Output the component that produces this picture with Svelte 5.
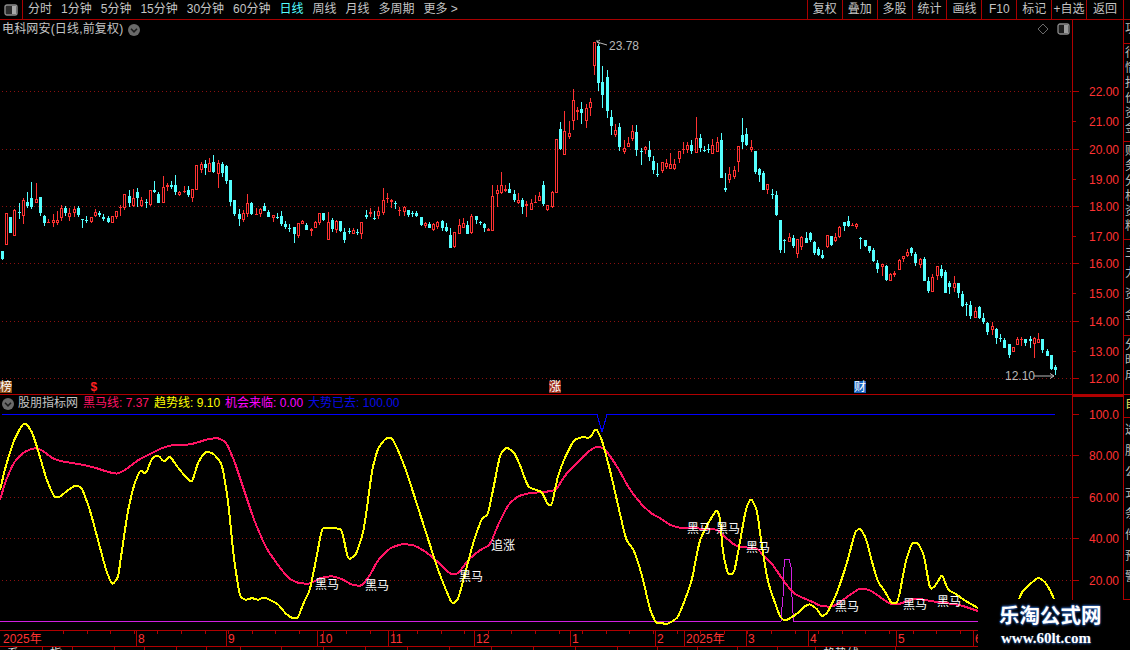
<script>
  // [high, bodyTop, bodyBottom, low, isRed] in chart pixels, one row per trading day
  const candles = [
    [251,251,259,260,0],[213,213,245,245,1],[217,217,233,233,0],[209,210,236,236,1],[203,212,213,219,0],
    [198,200,216,224,1],[192,202,206,208,0],[182,198,207,209,0],[183,199,203,203,1],[197,197,213,216,0],
    [215,216,223,226,0],[219,222,223,223,1],[214,220,223,227,1],[211,220,223,225,1],[205,208,218,221,1],
    [206,208,213,216,0],[208,213,217,221,1],[206,209,213,217,1],[206,208,215,217,0],[219,219,220,228,0],
    [216,220,221,223,0],[217,217,222,223,1],[209,212,216,217,1],[211,213,215,217,0],[214,217,219,221,0],
    [216,218,222,223,0],[216,216,223,223,1],[211,211,217,219,1],[205,207,207,216,1],[194,194,208,210,1],
    [190,196,203,207,0],[189,198,206,207,1],[188,192,198,207,0],[197,200,206,207,1],[199,202,203,208,0],
    [190,190,205,206,1],[181,190,192,193,0],[192,194,203,203,0],[176,187,203,203,1],[183,185,187,191,1],
    [181,185,187,189,0],[175,185,192,195,0],[191,192,195,196,1],[186,191,192,193,1],[186,190,195,197,0],
    [189,189,198,202,1],[165,165,190,190,1],[162,164,170,173,1],[160,164,168,175,0],[158,163,172,172,1],
    [155,162,172,173,0],[160,163,174,188,1],[162,164,173,177,0],[165,166,181,184,0],[180,180,202,206,0],
    [200,200,214,216,0],[209,214,219,226,0],[210,213,220,222,1],[194,203,214,217,1],[202,203,214,215,0],
    [208,214,214,215,1],[208,209,214,217,1],[203,206,211,211,0],[210,212,217,217,0],[215,215,218,222,1],
    [213,217,217,219,0],[211,216,224,226,0],[221,224,227,229,0],[224,228,229,232,0],[227,227,234,243,0],
    [223,223,236,238,1],[220,221,224,224,1],[223,225,230,230,0],[228,229,231,236,1],[221,222,228,228,1],
    [213,213,223,225,1],[213,213,220,221,0],[212,222,240,240,1],[218,220,229,232,0],[220,221,230,233,1],
    [221,221,231,232,0],[228,232,240,243,0],[228,231,232,234,0],[228,230,234,234,1],[229,232,233,235,0],
    [222,222,234,239,1],[210,215,217,219,0],[208,212,214,217,1],[211,218,219,220,0],[207,211,216,219,1],
    [188,200,213,215,1],[193,198,199,203,1],[199,200,202,208,1],[201,203,204,209,0],[207,210,211,216,1],
    [206,207,212,216,1],[210,210,215,217,0],[211,213,214,217,0],[211,213,216,217,0],[217,217,225,226,0],
    [222,223,226,228,1],[222,224,228,228,0],[223,224,230,231,1],[221,222,227,229,1],[220,221,228,231,0],
    [223,227,231,232,0],[228,235,248,248,0],[232,232,247,248,1],[219,225,234,234,1],[218,223,228,228,1],
    [221,225,234,234,0],[214,216,233,234,1],[216,216,220,224,0],[221,222,223,225,0],[223,224,228,232,0],
    [228,229,231,231,1],[185,196,231,231,1],[185,190,194,207,1],[172,185,193,194,1],[185,189,191,192,1],
    [183,189,193,193,0],[190,194,200,202,0],[193,200,203,204,1],[198,200,207,214,0],[201,204,206,217,1],
    [199,203,210,210,1],[195,202,203,203,1],[192,196,201,201,1],[181,185,204,206,0],[205,205,210,211,1],
    [191,192,207,208,1],[139,139,193,193,1],[122,129,149,150,0],[111,131,155,155,1],[121,133,137,139,1],
    [89,100,121,130,1],[107,110,112,120,1],[102,109,113,124,0],[104,108,121,128,1],[98,102,108,116,1],
    [42,42,66,75,1],[44,46,83,91,0],[66,82,95,108,0],[70,77,111,118,0],[110,117,126,135,0],
    [124,130,135,137,1],[123,127,147,151,0],[140,148,152,154,1],[137,143,147,147,1],[125,131,139,141,1],
    [125,132,150,156,0],[148,151,152,165,0],[146,147,150,154,1],[141,150,157,161,0],[156,161,170,174,0],
    [163,174,175,177,0],[162,162,171,173,1],[159,163,167,169,1],[153,164,169,169,1],[159,164,169,170,1],
    [151,151,159,163,1],[142,149,150,154,1],[142,145,150,153,1],[140,145,151,154,0],[117,138,153,153,1],
    [134,138,148,152,0],[146,150,151,152,0],[144,149,150,153,0],[139,145,154,154,1],[137,142,152,152,1],
    [133,140,178,178,0],[173,188,190,192,0],[167,174,180,183,1],[166,170,177,179,1],[146,146,162,172,1],
    [118,135,142,149,0],[128,134,145,146,0],[140,147,150,152,1],[151,151,172,174,0],[168,169,175,182,0],
    [171,173,190,190,0],[184,184,190,194,1],[189,194,195,199,0],[191,195,215,216,0],[220,220,250,253,0],
    [239,240,241,253,0],[233,237,242,242,1],[235,238,246,248,0],[239,239,254,258,1],[236,237,247,250,1],
    [232,238,243,243,0],[232,233,240,242,0],[241,242,253,255,0],[247,249,255,256,0],[250,255,258,259,0],
    [235,235,247,248,1],[236,236,245,246,0],[233,237,241,242,1],[226,227,237,238,1],[222,222,226,231,0],
    [216,221,226,227,0],[223,225,226,226,1],[223,224,227,229,1],[237,238,239,249,0],[240,240,246,247,0],
    [246,246,251,253,0],[248,250,261,262,0],[260,263,269,273,0],[264,264,267,276,1],[265,266,280,281,0],
    [273,274,281,281,1],[271,273,275,277,1],[259,260,270,270,1],[256,256,259,262,1],[249,252,256,257,1],
    [247,248,253,256,0],[252,254,263,266,0],[258,259,265,268,1],[257,259,281,281,0],[277,281,291,293,0],
    [274,277,292,292,1],[266,266,276,280,1],[265,269,276,278,0],[270,272,293,293,0],[281,283,287,294,0],
    [276,283,288,292,1],[283,283,293,298,0],[291,294,306,307,0],[302,304,305,316,0],[301,305,316,319,0],
    [307,311,318,318,1],[306,307,318,319,0],[313,318,322,324,0],[322,323,332,335,0],[322,326,330,335,1],
    [328,329,338,344,0],[334,338,339,342,0],[338,340,348,348,0],[344,344,355,358,0],[347,347,352,352,1],
    [337,339,345,345,1],[337,339,340,346,1],[339,339,343,346,0],[336,339,341,348,0],[337,338,344,358,1],
    [333,339,343,343,1],[339,339,350,353,0],[349,351,356,356,0],[355,355,369,370,0],[365,367,370,375,0],
  ];
  const candleX = (i) => Math.floor(2.3 + 4.23 * i);

  const periods = ["分时", "1分钟", "5分钟", "15分钟", "30分钟", "60分钟", "日线", "周线", "月线", "多周期", "更多 >"];
  const actions = ["复权", "叠加", "多股", "统计", "画线", "F10", "标记", "+自选", "返回"];

  const prices = [22, 21, 20, 19, 18, 17, 16, 15, 14, 13, 12];
  const priceY = [91, 121, 149, 179, 206, 236, 263, 293, 321, 351, 378];
  const kGrid = [91, 149, 206, 263, 321, 378];
  const subGrid = [455, 497, 538, 580];
  const subScale = [[414, "100.0"], [455, "80.00"], [497, "60.00"], [538, "40.00"], [580, "20.00"]];

  const yellow = "0,490 6,465 14,440 22,425 26,423 32,432 38,450 46,478 54,497 60,497 68,490 76,485 82,488 90,510 98,540 106,570 112,585 118,578 122,550 128,510 134,485 140,470 146,474 152,458 158,455 164,462 170,456 176,465 184,475 192,483 198,462 206,451 214,454 222,464 228,500 234,560 240,597 246,600 252,598 258,600 264,597 270,600 278,604 286,614 292,618 298,618 304,602 310,590 316,560 322,528 328,528 336,528 342,530 348,560 356,555 364,530 372,470 378,448 386,438 392,438 398,450 406,470 414,495 422,520 430,545 438,570 446,590 452,604 458,600 466,570 474,540 482,518 488,515 494,485 500,455 506,447 514,452 520,465 528,487 536,490 542,492 548,505 552,505 558,475 566,455 574,440 582,437 590,438 596,428 602,440 610,470 618,505 626,540 634,550 642,575 650,610 656,623 660,623 667,624 673,621 678,617 685,600 692,580 697,553 700,540 707,525 717,509 720,518 723,553 728,575 734,573 738,553 746,508 751,498 757,510 762,547 768,583 780,617 785,621 792,617 798,613 805,606 810,604 817,609 822,617 828,612 837,593 847,563 855,532 860,528 866,538 872,562 878,582 884,590 892,604 898,602 906,560 912,543 918,543 924,555 930,590 936,585 942,574 948,590 956,594 964,600 978,608";
  const yellowTail = "1019,599 1022,592 1027,587 1038,577 1045,582 1050,590 1054,599";
  const pink = "0,500 6,480 14,462 24,452 34,448 42,450 52,458 60,461 72,463 84,465 96,468 108,472 118,474 128,468 138,460 150,454 162,448 172,445 186,445 196,443 208,439 218,438 226,442 234,460 244,490 254,520 266,548 278,565 288,578 298,583 310,584 320,578 332,576 342,579 352,585 362,586 370,575 378,560 390,548 402,544 414,545 426,552 438,562 450,574 458,574 468,560 480,550 490,545 498,525 508,505 518,496 530,493 545,492 556,490 566,474 578,462 590,450 598,446 606,450 618,468 630,490 642,505 652,514 660,518 670,525 680,528 717,529 725,537 737,547 757,548 763,555 773,565 783,580 793,593 803,598 813,602 820,606 833,607 847,597 860,588 870,590 880,597 890,604 900,604 915,598 930,601 945,603 960,605 978,611";
  const pulse = "0,621.5 781,621.5 782,607 783,597 784,567 785,559 789,559 791,567 792,597 793,613 793.5,621.5 978,621.5";
  const blue = "2,414.5 597,414.5 602,432 607,414.5 1055,414.5";

  // takes the sharpest edge off the hand-read curve, corners stay close to the reading
  function soften(points) {
    const p = points.split(" ").map((s) => s.split(",").map(Number));
    const near = (a, b) => `${a[0] + (b[0] - a[0]) * 0.3} ${a[1] + (b[1] - a[1]) * 0.3}`;
    let d = `M${p[0][0]} ${p[0][1]}`;
    for (let i = 1; i < p.length - 1; i++) {
      d += `L${near(p[i], p[i - 1])}Q${p[i][0]} ${p[i][1]} ${near(p[i], p[i + 1])}`;
    }
    const last = p[p.length - 1];
    return d + `L${last[0]} ${last[1]}`;
  }

  const signals = [
    [315, 584, "黑马"], [365, 585, "黑马"], [459, 576, "黑马"], [491, 545, "追涨"], [687, 528, "黑马"],
    [716, 528, "黑马"], [746, 547, "黑马"], [835, 606, "黑马"], [903, 604, "黑马"], [937, 601, "黑马"],
  ];

  const months = [[3, "2025年", false], [136, "8", true], [226, "9", true], [317, "10", true], [388, "11", true], [474, "12", true], [570, "1", true], [655, "2", true], [684, "2025年", true], [746, "3", true], [808, "4", true], [896, "5", true], [973, "6", true]];
  const minorTicks = Array.from({ length: 39 }, (_, i) => 63 + i * 23.6);

  const footerCells = [["系", 43], ["指", 30], ["", 42], ["", 30], ["", 32], ["", 30], ["", 34], ["", 41], ["", 42], ["", 42], ["", 42], ["", 42], ["", 42], ["", 42], ["", 42], ["", 42], ["", 40], ["", 40], ["", 40], ["", 40], ["", 38], ["趋势线", 80]];

  const sideTabs = [
    { h: 24, text: "功" },
    { h: 98, text: "行情报价资金" },
    { h: 98, text: "财务分析资料" },
    { h: 96, text: "主力资金", wide: true },
    { h: 59, text: "分时成" },
    { h: 23, text: "自", gold: true },
    { h: 182, text: "选股公式条件预警", wide: true },
  ];
</script>

<div class="screen">
  <header class="toolbar">
    <div class="layout-btn">
      <svg width="14" height="12" viewBox="0 0 14 12">
        <rect x="1" y="1" width="12" height="10" rx="2" fill="#2c2c2c" stroke="#8c8c8c" stroke-width="1.4" />
        <rect x="8" y="2" width="4" height="8" fill="#a8a8a8" />
      </svg>
    </div>
    <nav class="periods">
      {#each periods as p}
        <span class:active={p === "日线"}>{p}</span>
      {/each}
    </nav>
    <div class="actions">
      {#each actions as a}
        <span>{a}</span>
      {/each}
    </div>
    <div class="toolbar-end"></div>
  </header>

  <div class="workspace">
    <main class="charts">
      <section class="kline">
        <div class="pane-title">
          <span>电科网安(日线,前复权)</span>
          <svg class="chev" width="12" height="12" viewBox="0 0 12 12">
            <circle cx="6" cy="6" r="6" fill="#6a6a6a" />
            <path d="M3 4.8 6 7.8 9 4.8" fill="none" stroke="#1c1c1c" stroke-width="1.6" />
          </svg>
        </div>
        <div class="pane-tools">
          <svg width="12" height="12" viewBox="0 0 12 12">
            <path d="M6 1 11 6 6 11 1 6Z" fill="none" stroke="#6a6a6a" />
          </svg>
          <svg width="13" height="12" viewBox="0 0 13 12">
            <rect x="1" y="1" width="11" height="10" rx="2" fill="#1c1c1c" stroke="#8c8c8c" stroke-width="1.3" />
            <rect x="7" y="2" width="4" height="8" fill="#9c9c9c" />
          </svg>
        </div>

        <svg class="plot" width="1072" height="374" viewBox="0 20 1072 374">
          {#each kGrid as y}
            <line class="grid" x1="2" x2="1072" y1={y + 0.5} y2={y + 0.5} />
          {/each}
          <g shape-rendering="crispEdges">
            {#each candles as [hi, top, bot, lo, red], i}
              {@const x = candleX(i)}
              {#if red}
                <rect class="wick-r" x={x} y={hi} width="1" height={Math.max(top - hi, 0)} />
                <rect class="wick-r" x={x} y={bot} width="1" height={Math.max(lo - bot, 0)} />
                {#if bot - top < 2}
                  <rect class="wick-r" x={x - 1} y={top} width="3" height="1" />
                {:else}
                  <rect class="body-r" x={x - 0.5} y={top + 0.5} width="2" height={bot - top - 1} />
                {/if}
              {:else}
                <rect class="wick-c" x={x} y={hi} width="1" height={lo - hi} />
                <rect class="wick-c" x={x - 1} y={top} width="3" height={Math.max(bot - top, 1)} />
              {/if}
            {/each}
          </g>

          <text class="note" x="609" y="50">23.78</text>
          <path class="note-line" d="M607 45 597 42M600 40 597 42 600 44M597 40V42" />
          <text class="note" x="1005" y="380">12.10</text>
          <path class="note-line" d="M1034 376H1054M1050 373.5 1054 376 1050 378.5" />

          <rect class="tag-brown" x="0" y="381" width="12" height="12" />
          <text class="tag-text" x="0" y="391">榜</text>
          <text class="dollar" x="90.5" y="391">$</text>
          <rect class="tag-red" x="549" y="381" width="12" height="12" />
          <text class="tag-text" x="549" y="391">涨</text>
          <rect class="tag-blue" x="854" y="381" width="12" height="12" />
          <text class="tag-text" x="854" y="391">财</text>
        </svg>
      </section>

      <section class="indicator">
        <div class="legend">
          <svg class="chev" width="12" height="12" viewBox="0 0 12 12">
            <circle cx="6" cy="6" r="6" fill="#6a6a6a" />
            <path d="M3 4.8 6 7.8 9 4.8" fill="none" stroke="#1c1c1c" stroke-width="1.6" />
          </svg>
          <span class="name">股朋指标网</span>
          <span class="l-pink">黑马线: 7.37</span>
          <span class="l-yellow">趋势线: 9.10</span>
          <span class="l-magenta">机会来临: 0.00</span>
          <span class="l-blue">大势已去: 100.00</span>
        </div>
        <svg class="plot" width="1072" height="235" viewBox="0 395 1072 235">
          {#each subGrid as y}
            <line class="grid" x1="2" x2="1072" y1={y + 0.5} y2={y + 0.5} />
          {/each}
          <g shape-rendering="crispEdges">
            <polyline class="ln-blue" points={blue} />
            <polyline class="ln-magenta" points={pulse} />
            <path class="ln-pink" d={soften(pink)} />
            <path class="ln-yellow" d={soften(yellow)} />
            <path class="ln-yellow" d={soften(yellowTail)} />
          </g>
          {#each signals as [x, y, label]}
            <text class="signal" x={x} y={y + 5}>{label}</text>
          {/each}
        </svg>
      </section>

      <div class="timeline">
        <svg width="1072" height="15" viewBox="0 0 1072 15">
          {#each minorTicks as x}
            <line class="tick" x1={Math.round(x) + 0.5} x2={Math.round(x) + 0.5} y1="0" y2="3" />
          {/each}
          {#each months as [x, label, hasLine]}
            {#if hasLine}
              <line class="tick" x1={x + 0.5} x2={x + 0.5} y1="0" y2="15" />
            {/if}
            <text class="month" x={hasLine ? x + 2 : x} y="12">{label}</text>
          {/each}
        </svg>
      </div>

      <footer class="status">
        {#each footerCells as [label, w]}
          <span style="width: {w}px">{label}</span>
        {/each}
      </footer>
    </main>

    <aside class="scale">
      <div class="scale-top">
        <svg width="50" height="375" viewBox="0 20 50 375">
          {#each prices as p, i}
            <line class="tick" x1="0" x2={p % 2 ? 3 : 6} y1={priceY[i] + 0.5} y2={priceY[i] + 0.5} />
            <text class="price" x="16" y={priceY[i] + 5}>{p}.00</text>
          {/each}
        </svg>
      </div>
      <div class="scale-sub">
        <svg width="50" height="233" viewBox="0 397 50 233">
          {#each subScale as [y, label]}
            <line class="tick" x1="0" x2="6" y1={y + 0.5} y2={y + 0.5} />
            <text class="price" x="16" y={y + 5}>{label}</text>
          {/each}
        </svg>
      </div>
    </aside>

    <aside class="side-tabs">
      {#each sideTabs as tab}
        <div class="side-tab" class:wide={tab.wide} class:gold={tab.gold} style="height: {tab.h}px">{tab.text}</div>
      {/each}
    </aside>
  </div>

  <div class="watermark">
    <strong>乐淘公式网</strong>
    <em>www.60lt.com</em>
  </div>
</div>

<style>
  :global(body) {
    margin: 0;
    background: #000;
  }

  .screen {
    position: relative;
    width: 1130px;
    height: 650px;
    overflow: hidden;
    background: #000;
    color: #c4c4c4;
    font-family: "Liberation Sans", "Noto Sans CJK SC", sans-serif;
    font-size: 12px;
  }

  .toolbar {
    display: flex;
    height: 20px;
    box-sizing: border-box;
    border-bottom: 1px solid #a80000;
    line-height: 18px;
  }

  .layout-btn {
    width: 23px;
    box-sizing: border-box;
    border-right: 1px solid #a80000;
    display: flex;
    align-items: center;
    justify-content: center;
    padding-right: 1px;
  }

  .periods {
    display: flex;
    gap: 9px;
    padding-left: 5px;
    flex: 1;
  }

  .periods span {
    white-space: nowrap;
  }

  .periods .active {
    color: #54ffff;
  }

  .actions {
    display: flex;
    border-left: 1px solid #a80000;
  }

  .actions span {
    width: 34.9px;
    box-sizing: border-box;
    border-right: 1px solid #a80000;
    text-align: center;
    white-space: nowrap;
  }

  .actions span:last-child {
    width: 37px;
  }

  .toolbar-end {
    width: 6px;
  }

  .workspace {
    display: flex;
    height: 630px;
  }

  .charts {
    width: 1072px;
    display: flex;
    flex-direction: column;
  }

  .kline {
    position: relative;
    height: 375px;
    box-sizing: border-box;
    border-bottom: 1px solid #b00000;
  }

  .pane-title {
    position: absolute;
    left: 2px;
    top: 1px;
    display: flex;
    align-items: center;
    gap: 5px;
    line-height: 17px;
    letter-spacing: 0.17px;
  }

  .pane-tools {
    position: absolute;
    right: 2px;
    top: 3px;
    display: flex;
    gap: 8px;
  }

  .plot {
    display: block;
  }

  .grid {
    stroke: #8a1010;
    stroke-dasharray: 1 3;
  }

  .wick-r {
    fill: #ff3232;
  }

  .wick-c {
    fill: #54ffff;
  }

  .body-r {
    fill: none;
    stroke: #ff3232;
  }

  .note {
    fill: #b8b8b8;
    font-size: 12px;
  }

  .note-line {
    fill: none;
    stroke: #b8b8b8;
  }

  .tag-brown {
    fill: #8c4a14;
  }

  .tag-red {
    fill: #a0301c;
  }

  .tag-blue {
    fill: #1a62c0;
  }

  .tag-text {
    fill: #fff;
    font-size: 12px;
  }

  .dollar {
    fill: #ff2020;
    font-size: 12px;
    font-weight: 700;
  }

  .indicator {
    position: relative;
    height: 236px;
    box-sizing: border-box;
    border-bottom: 1px solid #b00000;
  }

  .legend {
    position: absolute;
    left: 2px;
    top: 0;
    display: flex;
    align-items: center;
    gap: 5px;
    line-height: 17px;
    white-space: nowrap;
  }

  .legend .chev {
    margin-right: -1px;
  }

  .l-pink {
    color: #ff1464;
  }

  .l-yellow {
    color: #ffff00;
  }

  .l-magenta {
    color: #ff00ff;
  }

  .l-blue {
    color: #0a0ae6;
  }

  polyline,
  path.ln-pink,
  path.ln-yellow {
    fill: none;
  }

  .ln-blue {
    stroke: #0000ff;
    stroke-width: 1;
  }

  .ln-magenta {
    stroke: #d020e0;
    stroke-width: 1;
  }

  .ln-pink {
    stroke: #ff1464;
    stroke-width: 2;
  }

  .ln-yellow {
    stroke: #ffff00;
    stroke-width: 2;
  }

  .signal {
    fill: #fff;
    font-size: 12px;
  }

  .timeline {
    height: 16px;
    box-sizing: border-box;
    border-bottom: 1px solid #b00000;
  }

  .timeline svg {
    display: block;
  }

  .tick {
    stroke: #b00000;
  }

  .month {
    fill: #ff3232;
    font-size: 12px;
  }

  .status {
    display: flex;
    height: 3px;
    overflow: hidden;
    line-height: 14px;
    color: #dcdcdc;
  }

  .status span {
    box-sizing: border-box;
    border-right: 1px solid #b00000;
    padding-left: 7px;
    white-space: nowrap;
    overflow: hidden;
  }

  .scale {
    width: 51px;
    box-sizing: border-box;
    border-left: 1px solid #b00000;
    display: flex;
    flex-direction: column;
  }

  .scale-top svg,
  .scale-sub svg {
    display: block;
  }

  .scale-sub {
    border-top: 3px solid #b00000;
    margin-top: -1px;
  }

  .price {
    fill: #ff3232;
    font-size: 12px;
  }

  .side-tabs {
    width: 7px;
    box-sizing: border-box;
    border-left: 1px solid #b00000;
    overflow: hidden;
    display: flex;
    flex-direction: column;
  }

  .side-tab {
    width: 14px;
    box-sizing: border-box;
    padding: 2px 0 0 1px;
    border-bottom: 1px solid #b00000;
    line-height: 15px;
    overflow: hidden;
    word-break: break-all;
    color: #bdbdbd;
    flex: none;
  }

  .side-tab.wide {
    line-height: 21px;
  }

  .side-tab.gold {
    color: #e0e060;
  }

  .watermark {
    position: absolute;
    right: 0;
    bottom: 0;
    width: 152px;
    height: 50px;
    box-sizing: border-box;
    padding: 3px 0 0 21px;
    background: #000;
    display: flex;
    flex-direction: column;
    color: #fff;
  }

  .watermark strong {
    font-size: 20.5px;
    line-height: 26px;
    text-shadow: 0 1px 2px #2a5fb0, 0 -1px 2px #2a5fb0;
    white-space: nowrap;
  }

  .watermark em {
    font-family: "Liberation Serif", serif;
    font-style: normal;
    font-weight: 700;
    font-size: 15px;
    line-height: 18px;
    padding-left: 2px;
    text-shadow: 0 1px 2px #2a5fb0;
  }
</style>
